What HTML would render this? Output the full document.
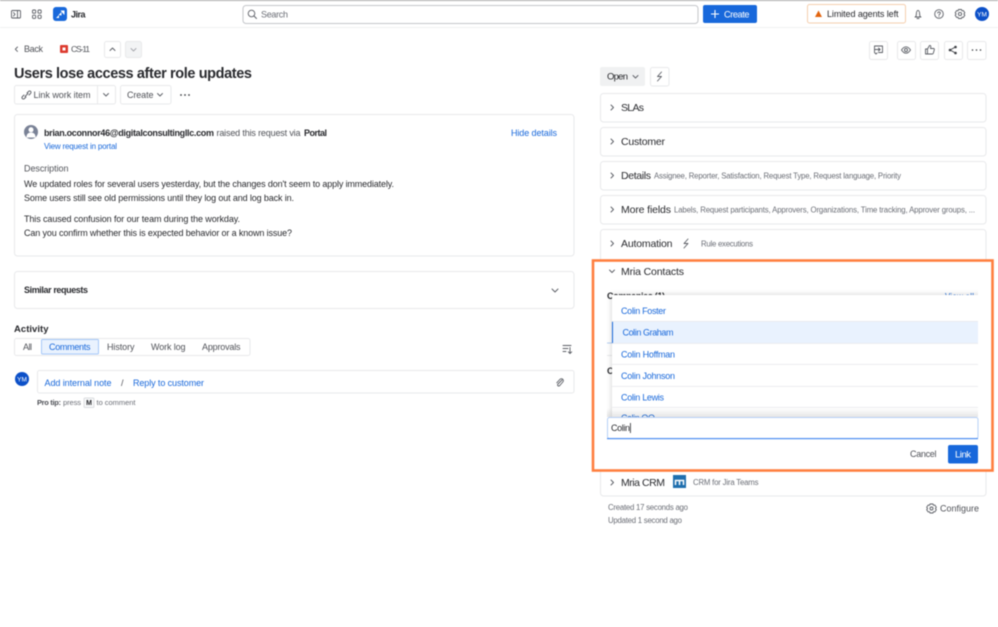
<!DOCTYPE html>
<html><head><meta charset="utf-8"><title>Jira</title>
<style>
html,body{margin:0;padding:0;background:#fff;width:998px;height:627px;overflow:hidden}
svg{display:block;filter:blur(.4px)}
text{font-family:"Liberation Sans",sans-serif;font-size:9px;fill:#292a2e;white-space:pre}
.b{font-weight:700}
.l{fill:#1868db}
.g{fill:#505258}
.s{fill:#6b6e76;font-size:7.8px}
.h{font-size:10.5px}
.c{fill:#fff;stroke:#e8e9eb;stroke-width:1}
.i{fill:none;stroke:#5a5d64;stroke-width:.9;stroke-linecap:round;stroke-linejoin:round}
</style></head><body>
<svg width="998" height="627" viewBox="0 0 998 627" xmlns="http://www.w3.org/2000/svg">
<defs>
<filter id="sh" x="-5%" y="-10%" width="110%" height="120%"><feDropShadow dx="0" dy="0" stdDeviation="3" flood-color="#000" flood-opacity=".2"/></filter>
<clipPath id="cp"><rect x="600" y="285" width="378" height="135"/></clipPath>
<linearGradient id="fd" x1="0" y1="0" x2="0" y2="1"><stop offset="0" stop-color="#000" stop-opacity="0"/><stop offset="1" stop-color="#000" stop-opacity=".1"/></linearGradient>
</defs>
<rect width="998" height="627" fill="#fff"/>
<!-- top bar -->
<rect width="998" height="1" fill="#a9a9a9"/>
<rect y="27" width="998" height="1" fill="#f0f1f2"/>
<g class="i">
<rect x="11.5" y="10.5" width="9" height="7.5" rx="1"/><path d="M17.5 10.5v7.500M13.500 12.500l1.500 1.800-1.500 1.800"/>
<rect x="32.5" y="10" width="3.2" height="3.2" rx="1"/><rect x="38" y="10" width="3.2" height="3.2" rx="1"/><rect x="32.5" y="15.2" width="3.2" height="3.2" rx="1"/><rect x="38" y="15.2" width="3.2" height="3.2" rx="1"/>
</g>
<rect x="53" y="7" width="14" height="14" rx="3" fill="#1868db"/>
<path d="M56 18l3-3v3zM58.500 15l3-3v3.500zM60.500 10.500h4v4.500l-2-2z" fill="#fff"/>
<text x="71" y="17.500" class="b" textLength="14.500">Jira</text>
<rect x="243" y="5.500" width="455" height="18" rx="3" fill="#fff" stroke="#c4c6ca"/>
<circle cx="251.500" cy="13.500" r="3.300" class="i"/><path d="M254 16l2.500 2.500" class="i"/>
<text x="261" y="17.500" class="s" style="font-size:9px" textLength="27">Search</text>
<rect x="703" y="5" width="54" height="18" rx="2" fill="#1868db"/>
<path d="M711 14h8M715 10v8" stroke="#fff" stroke-width="1.100" fill="none"/>
<text x="724" y="17.500" style="fill:#fff;font-size:9.200px" textLength="25.500">Create</text>
<rect x="807.500" y="4.500" width="98" height="18.500" rx="2" fill="#fff" stroke="#f5cfae"/>
<path d="M818.500 10.500l3.500 6.500h-7z" fill="#e2640f"/>
<text x="827" y="17" textLength="71.500">Limited agents left</text>
<path class="i" d="M915 17h6M915.500 17c.9-1 .9-2 .9-3.500 0-1.600.7-3 1.600-3s1.600 1.400 1.600 3c0 1.500 0 2.500.9 3.500M917 18.500h2"/>
<circle cx="939" cy="14" r="4.300" class="i"/><path class="i" d="M937.700 13c.3-1.500 2.700-1.300 2.600.2 0 1-1.300 1-1.300 2M939 16.500v.1"/>
<circle cx="960" cy="14" r="1.600" class="i"/><path class="i" d="M958.500 9.500h3l.5 1.300 1.400-.2 1.400 2.200-.9 1.200.9 1.200-1.400 2.200-1.400-.2-.5 1.300h-3l-.5-1.300-1.400.2-1.400-2.200.9-1.200-.9-1.200 1.400-2.200 1.400.2z"/>
<circle cx="982" cy="14" r="7" fill="#0c50c8"/>
<text x="982" y="16.300" text-anchor="middle" style="fill:#fff;font-size:6.500px">YM</text>
<!-- breadcrumbs -->
<path class="i" d="M17.500 47l-2.200 2.200 2.200 2.200"/>
<text x="24" y="52" class="g" textLength="19">Back</text>
<rect x="60" y="45" width="8" height="8" rx="1" fill="#dc3b2f"/><rect x="62.500" y="47.500" width="3" height="3" fill="#fff"/>
<text x="71" y="52" class="g" style="font-size:8.500px" textLength="19">CS-11</text>
<rect x="104.500" y="41.500" width="16" height="16" rx="2" class="c"/><path class="i" d="M110 50.500l2.500-2.500 2.500 2.500"/>
<rect x="125.500" y="41.500" width="16" height="16" rx="2" fill="#f3f4f5" stroke="#e8e9eb"/><path class="i" style="stroke:#a5a7ac" d="M131 48.500l2.500 2.500 2.500-2.500"/>
<text x="14" y="78" class="b" style="font-size:14.500px" textLength="238">Users lose access after role updates</text>
<!-- link/create -->
<rect x="14.500" y="85.500" width="101" height="18.500" rx="2" class="c"/><path d="M97.500 85.500v18.500" stroke="#e8e9eb"/>
<path class="i" d="M25 96.500l3-3M24 95l-1.500 1.500c-1.500 1.500.5 3.500 2 2l1.500-1.500M27 93l1.500-1.500c1.500-1.500 3.500.5 2 2L29 95"/>
<text x="33.500" y="98" class="g" textLength="57">Link work item</text>
<path class="i" d="M103.500 93.500l2.500 2.500 2.500-2.500"/>
<rect x="120.500" y="85.500" width="50.500" height="18.500" rx="2" class="c"/>
<text x="127" y="98" class="g" textLength="26.500">Create</text>
<path class="i" d="M157.500 93.500l2.500 2.500 2.500-2.500"/>
<g fill="#3b3d42"><circle cx="181" cy="95" r=".9"/><circle cx="185" cy="95" r=".9"/><circle cx="189" cy="95" r=".9"/></g>
<!-- right actions -->
<rect x="869.500" y="41.500" width="18" height="18" rx="2" class="c"/><rect x="897.500" y="41.500" width="18" height="18" rx="2" class="c"/><rect x="920.500" y="41.500" width="18" height="18" rx="2" class="c"/><rect x="944.500" y="41.500" width="18" height="18" rx="2" class="c"/><rect x="967.500" y="41.500" width="18.500" height="18" rx="2" class="c"/>
<path class="i" d="M874.500 52.500v-6.500h8v6.500h-4M875 49.500h5M878.500 48l1.700 1.500-1.700 1.500M874.500 52.500l1.500 1.500 1-1"/>
<path class="i" d="M901.500 50c1.500-2.300 3-3.200 4.500-3.200s3 .9 4.500 3.200c-1.500 2.300-3 3.200-4.500 3.200s-3-.9-4.500-3.200z"/><circle cx="906" cy="50" r="1.500" class="i"/>
<path class="i" d="M925.500 49h2v5h-2zM927.500 49l2-3.500c1-.3 1.500.5 1.300 1.500l-.3 1.500h3c.7 0 1 .5.8 1.200l-1 3.500c-.1.500-.5.800-1 .800h-4.800"/>
<circle cx="950" cy="50" r="1.300" fill="#3b3d42"/><circle cx="955.500" cy="47" r="1.300" fill="#3b3d42"/><circle cx="955.500" cy="53" r="1.300" fill="#3b3d42"/><path d="M950 50l5.500-3M950 50l5.500 3" stroke="#3b3d42" stroke-width=".8"/>
<g fill="#3b3d42"><circle cx="972.500" cy="50" r=".8"/><circle cx="976.500" cy="50" r=".8"/><circle cx="980.500" cy="50" r=".8"/></g>
<!-- request card -->
<rect x="14.500" y="114.500" width="559.500" height="141.500" rx="3" class="c"/>
<circle cx="31" cy="132" r="7" fill="#7a8296"/><circle cx="31" cy="129.800" r="2.500" fill="#fff"/><path d="M26.500 137c0-3 2-4.500 4.500-4.500s4.500 1.500 4.500 4.500v.5h-9z" fill="#fff"/>
<text x="44" y="136" class="b" textLength="170">brian.oconnor46@digitalconsultingllc.com</text>
<text x="216.500" y="136" class="g" textLength="84">raised this request via</text>
<text x="304" y="136" class="b" textLength="23">Portal</text>
<text x="44" y="149" class="l" style="font-size:8px" textLength="73">View request in portal</text>
<text x="511" y="136" class="l" textLength="46">Hide details</text>
<text x="24" y="171.500" class="g" textLength="44.500">Description</text>
<text x="24" y="187" textLength="370">We updated roles for several users yesterday, but the changes don't seem to apply immediately.</text>
<text x="24" y="201" textLength="270">Some users still see old permissions until they log out and log back in.</text>
<text x="24" y="222" textLength="216">This caused confusion for our team during the workday.</text>
<text x="24" y="236" textLength="268">Can you confirm whether this is expected behavior or a known issue?</text>
<!-- similar -->
<rect x="14.500" y="271.500" width="559.500" height="37" rx="3" class="c"/>
<text x="24" y="293" class="b" textLength="64">Similar requests</text>
<path class="i" d="M552 289l3 3 3-3"/>
<!-- activity -->
<text x="14" y="332" class="b" style="font-size:9.500px" textLength="34.500">Activity</text>
<rect x="14.500" y="338.500" width="235.500" height="17" rx="2" class="c"/>
<rect x="41.500" y="339.500" width="57" height="14.500" rx="1" fill="#e9f2fe" stroke="#a6c8f8"/>
<text x="23" y="350" class="g" textLength="9">All</text>
<text x="49" y="350" class="l" textLength="41.500">Comments</text>
<text x="107" y="350" class="g" textLength="27.500">History</text>
<text x="151" y="350" class="g" textLength="34.500">Work log</text>
<text x="202" y="350" class="g" textLength="38.500">Approvals</text>
<path class="i" d="M563 345.500h8M563 348.500h5M563 351.500h3M570 347.500v6M568.300 351.800l1.700 1.700 1.700-1.700"/>
<circle cx="22" cy="379" r="7" fill="#0c50c8"/><text x="22" y="381.300" text-anchor="middle" style="fill:#fff;font-size:6.500px">YM</text>
<rect x="37.500" y="370.500" width="536.500" height="22.500" rx="2" class="c"/>
<text x="44.500" y="386" class="l" textLength="67">Add internal note</text>
<text x="121" y="386" class="g">/</text>
<text x="133" y="386" class="l" textLength="71">Reply to customer</text>
<path class="i" d="M562 380l-4 4c-1.300 1.300 .5 2.800 1.800 1.500l3-3.500c1.800-2-1-4.500-3-2.500l-3 3.300"/>
<text x="37" y="405" class="b g" style="font-size:7.500px" textLength="24">Pro tip:</text>
<text x="63" y="405" class="s" style="font-size:7.500px" textLength="18">press</text>
<rect x="84" y="398" width="10" height="9.500" rx="1" fill="#f7f8f9" stroke="#d0d2d6" stroke-width=".7"/>
<text x="89" y="405" text-anchor="middle" class="b" style="font-size:7px">M</text>
<text x="96.500" y="405" class="s" style="font-size:7.500px" textLength="39">to comment</text>
<!-- right column -->
<rect x="600" y="67" width="45" height="19" rx="2" fill="#f0f1f2"/>
<text x="607" y="79.500" style="font-size:9.500px" textLength="21">Open</text>
<path class="i" d="M633 75.500l2.500 2.500 2.500-2.500"/>
<rect x="650.500" y="67.500" width="18.500" height="18.500" rx="2" class="c"/>
<path class="i" d="M661.500 72l-4 4.500h4l-4 4.500"/>
<rect x="600.500" y="93.500" width="385.500" height="28.500" rx="3" class="c"/>
<rect x="600.500" y="127.500" width="385.500" height="28.500" rx="3" class="c"/>
<rect x="600.500" y="161.500" width="385.500" height="28.500" rx="3" class="c"/>
<rect x="600.500" y="195.500" width="385.500" height="28.500" rx="3" class="c"/>
<rect x="600.500" y="229.500" width="385.500" height="266.500" rx="3" class="c"/>
<g class="i"><path d="M611 105l2.500 2.500-2.500 2.500M611 139l2.500 2.500-2.500 2.500M611 173l2.500 2.500-2.500 2.500M611 207l2.500 2.500-2.500 2.500M611 241l2.500 2.500-2.500 2.500M611 480l2.500 2.500-2.500 2.500"/></g>
<text x="621" y="111" class="h" textLength="23">SLAs</text>
<text x="621" y="145" class="h" textLength="44">Customer</text>
<text x="621" y="179" class="h" textLength="30">Details</text>
<text x="621" y="213" class="h" textLength="50">More fields</text>
<text x="621" y="247" class="h" textLength="51.500">Automation</text>
<text x="654" y="178.500" class="s" textLength="247">Assignee, Reporter, Satisfaction, Request Type, Request language, Priority</text>
<text x="674" y="212.500" class="s" textLength="301">Labels, Request participants, Approvers, Organizations, Time tracking, Approver groups, ...</text>
<path class="i" d="M688 239l-4 4.500h4l-4 4.500"/>
<text x="701" y="246.500" class="s" textLength="52">Rule executions</text>
<!-- orange highlight -->
<rect x="593" y="260.500" width="399.500" height="210" fill="#fff" stroke="#ff7f3f" stroke-width="2.600"/>
<path class="i" d="M609.500 270l2.500 2.500 2.500-2.500"/>
<text x="621" y="275" class="h" textLength="63">Mria Contacts</text>
<text x="607" y="299" class="b" textLength="58">Companies (1)</text>
<text x="945" y="299" class="l" style="font-size:8px" textLength="29">View all</text>
<text x="607" y="374" class="b">C</text>
<path d="M607 355.500h6" stroke="#e8e9eb"/>
<path d="M607 343h5" stroke="#1868db" stroke-width=".8" stroke-opacity=".4"/>
<!-- dropdown -->
<g clip-path="url(#cp)"><rect x="612" y="295" width="372" height="123" fill="#fff" filter="url(#sh)"/></g>
<rect x="612" y="321.500" width="366" height="21.500" fill="#e9f2fe"/>
<rect x="612" y="321.500" width="1" height="21.500" fill="#1868db"/>
<g fill="#e8e9eb"><rect x="612" y="321" width="366" height=".8"/><rect x="612" y="343" width="366" height=".8"/><rect x="612" y="364" width="366" height=".8"/><rect x="612" y="386" width="366" height=".8"/><rect x="612" y="407" width="366" height=".8"/></g>
<text x="621" y="314" class="l" textLength="45">Colin Foster</text>
<text x="622.500" y="335.500" class="l" textLength="51">Colin Graham</text>
<text x="621" y="357.500" class="l" textLength="54">Colin Hoffman</text>
<text x="621" y="379" class="l" textLength="54">Colin Johnson</text>
<text x="621" y="400.500" class="l" textLength="43">Colin Lewis</text>
<text x="621" y="421" class="l" textLength="34">Colin OO</text>
<rect x="607" y="408" width="371" height="9" fill="url(#fd)"/>
<rect x="606" y="417" width="373" height="24" fill="#fff"/>
<!-- input -->
<rect x="607.500" y="417.500" width="370.500" height="21" rx="2" fill="#fff" stroke="#b6d0f7"/>
<rect x="607" y="438" width="371" height="1.200" fill="#4c8df0"/>
<text x="611" y="431" textLength="19">Colin</text>
<rect x="630" y="423" width=".8" height="10" fill="#292a2e"/>
<text x="910" y="457" class="g" textLength="26.500">Cancel</text>
<rect x="948" y="445" width="30" height="18.500" rx="2" fill="#1868db"/>
<text x="955" y="457.500" style="fill:#fff;font-size:9.500px" textLength="16">Link</text>
<!-- crm -->
<text x="621" y="486" class="h" textLength="44">Mria CRM</text>
<rect x="673" y="475" width="13" height="13" fill="#1f6fae"/>
<path d="M675.500 485v-4.500h8v4.500M679.500 480.500v4.500" fill="none" stroke="#fff" stroke-width="1.500"/>
<text x="693" y="485" class="s" textLength="65.500">CRM for Jira Teams</text>
<text x="608" y="510" class="s" textLength="80">Created 17 seconds ago</text>
<text x="608" y="523" class="s" textLength="74">Updated 1 second ago</text>
<circle cx="931.500" cy="508.500" r="1.500" class="i"/><path class="i" d="M930 504h3l.5 1.300 1.400-.2 1.400 2.200-.9 1.200.9 1.200-1.400 2.200-1.400-.2-.5 1.300h-3l-.5-1.300-1.400.2-1.400-2.200.9-1.200-.9-1.200 1.400-2.200 1.400.2z"/>
<text x="940" y="511.500" class="g" textLength="39">Configure</text>
</svg>
</body></html>
